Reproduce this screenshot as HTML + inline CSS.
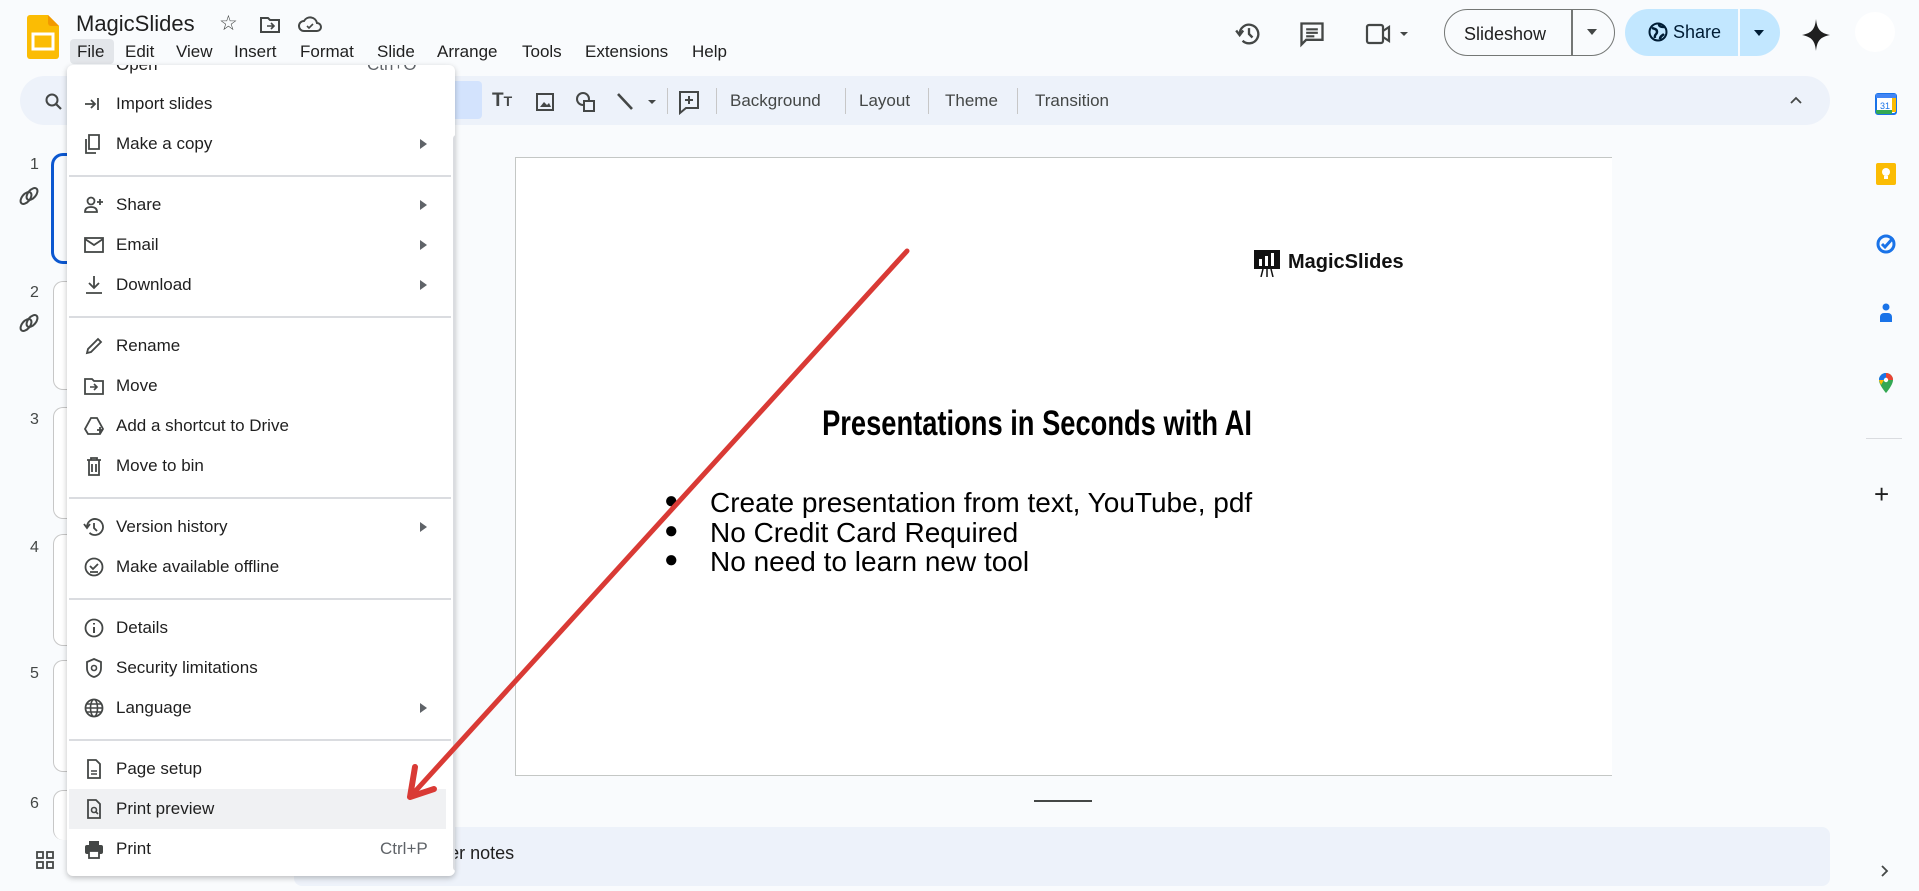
<!DOCTYPE html>
<html><head><meta charset="utf-8"><style>
*{box-sizing:border-box;margin:0;padding:0}
body{width:1919px;height:891px;overflow:hidden;background:#f9fbfd;font-family:"Liberation Sans",sans-serif;color:#1f1f1f;position:relative}
.a{position:absolute}
.mb span{position:absolute;top:42px;font-size:17px;color:#1f1f1f}
.tb{left:20px;top:76px;width:1810px;height:49px;border-radius:25px;background:#edf2fa}
.tt{position:absolute;top:91px;font-size:17px;color:#444746}
.sep{position:absolute;top:88px;width:1px;height:26px;background:#c7c7c7}
.menu{left:67px;top:65px;width:388px;height:811px;background:#fff;border-radius:6px;box-shadow:0 2px 6px rgba(0,0,0,.25);overflow:hidden}
.it{position:absolute;left:0;width:382px;height:40px}
.it .t{position:absolute;left:49px;top:10px;font-size:17px;color:#1f1f1f}
.it .r{position:absolute;left:353px;top:15px;width:0;height:0;border-left:7px solid #5f6368;border-top:5px solid transparent;border-bottom:5px solid transparent}
.it svg{position:absolute;left:16px;top:9px}
.hr{position:absolute;left:2px;width:382px;height:1.5px;background:#dadce0}
.num{position:absolute;left:30px;font-size:16px;color:#444746}
.th{position:absolute;left:53px;width:30px;border:1px solid #c7c7c7;border-right:none;border-radius:10px 0 0 10px;background:#fff}
.rs{position:absolute;left:1875px;width:22px;height:22px}
.bl{position:absolute;font-size:28px;color:#000;white-space:nowrap}
</style></head><body>

<svg class="a" style="left:27px;top:15px" width="32" height="44" viewBox="0 0 32 44"><path d="M3 0h18l11 11v30a3 3 0 0 1-3 3H3a3 3 0 0 1-3-3V3a3 3 0 0 1 3-3z" fill="#fbbc04"/><path d="M21 0l11 11h-8a3 3 0 0 1-3-3z" fill="#f29900"/><rect x="6" y="19" width="20" height="15" fill="none" stroke="#fff" stroke-width="3"/></svg>
<div class="a" style="left:76px;top:11px;font-size:22px;color:#1f1f1f">MagicSlides</div>
<div class="a" style="left:219px;top:11px;font-size:21px;color:#444746">☆</div>
<svg class="a" style="left:259px;top:15px" width="22" height="20" viewBox="0 0 22 20"><path d="M2 3h7l2 2h9v12H2z" fill="none" stroke="#444746" stroke-width="2"/><path d="M8 11h7m-3-3l3 3-3 3" fill="none" stroke="#444746" stroke-width="1.6"/></svg>
<svg class="a" style="left:297px;top:14px" width="26" height="20" viewBox="0 0 26 20"><path d="M7 17a5 5 0 0 1 0-10 7 7 0 0 1 13 2 4 4 0 0 1 0 8z" fill="none" stroke="#444746" stroke-width="2"/><path d="M10 12l2 2 4-4" fill="none" stroke="#444746" stroke-width="1.6"/></svg>

<div class="a" style="left:70px;top:39px;width:44px;height:25px;background:#e3e6ea;border-radius:4px"></div>
<div class="mb"><span style="left:77px">File</span><span style="left:125px">Edit</span><span style="left:176px">View</span><span style="left:234px">Insert</span><span style="left:300px">Format</span><span style="left:377px">Slide</span><span style="left:437px">Arrange</span><span style="left:522px">Tools</span><span style="left:585px">Extensions</span><span style="left:692px">Help</span></div>

<svg class="a" style="left:1235px;top:20px" width="28" height="28" viewBox="0 0 24 24"><path d="M4 12a8 8 0 1 1 2.5 5.8" fill="none" stroke="#444746" stroke-width="2"/><path d="M1 9l3 4 3-4" fill="none" stroke="#444746" stroke-width="2"/><path d="M12 7v5l3 3" fill="none" stroke="#444746" stroke-width="2"/></svg>
<svg class="a" style="left:1298px;top:20px" width="28" height="28" viewBox="0 0 24 24"><path d="M3 3h18v14H7l-4 4z" fill="none" stroke="#444746" stroke-width="2"/><path d="M7 8h10M7 11h10M7 14h7" stroke="#444746" stroke-width="1.8"/></svg>
<svg class="a" style="left:1365px;top:21px" width="45" height="26" viewBox="0 0 45 26"><rect x="2" y="4" width="16" height="18" rx="2" fill="none" stroke="#444746" stroke-width="2.2"/><path d="M18 10l6-4v14l-6-4" fill="none" stroke="#444746" stroke-width="2.2"/><path d="M35 11l4 4 4-4z" fill="#444746"/></svg>
<div class="a" style="left:1444px;top:9px;width:171px;height:47px;border:1.5px solid #747775;border-radius:24px"></div>
<div class="a" style="left:1571px;top:9px;width:1.5px;height:47px;background:#747775"></div>
<div class="a" style="left:1464px;top:24px;font-size:18px;color:#1f1f1f">Slideshow</div>
<div class="a" style="left:1587px;top:29px;border-top:6px solid #444746;border-left:5px solid transparent;border-right:5px solid transparent"></div>
<div class="a" style="left:1625px;top:9px;width:155px;height:47px;background:#c2e7ff;border-radius:24px"></div>
<div class="a" style="left:1738px;top:9px;width:1.5px;height:47px;background:#f9fbfd"></div>
<svg class="a" style="left:1648px;top:22px" width="20" height="20" viewBox="0 0 20 20"><circle cx="10" cy="10" r="8.5" fill="none" stroke="#001d35" stroke-width="2"/><path d="M4 6c3 1 5 1 5 4s-3 2-2 6M11 2c0 3 3 3 6 3M12 17c0-3 2-3 4-5" fill="none" stroke="#001d35" stroke-width="2.5"/></svg>
<div class="a" style="left:1673px;top:22px;font-size:18px;color:#001d35">Share</div>
<div class="a" style="left:1754px;top:30px;border-top:6px solid #001d35;border-left:5px solid transparent;border-right:5px solid transparent"></div>
<svg class="a" style="left:1802px;top:19px" width="28" height="32" viewBox="0 0 28 32"><path d="M14 0C15 10 18 14 28 16 18 18 15 22 14 32 13 22 10 18 0 16 10 14 13 10 14 0z" fill="#1f1f1f"/></svg>
<div class="a" style="left:1855px;top:12px;width:40px;height:40px;border-radius:50%;background:#fff"></div>

<div class="a tb"></div>
<svg class="a" style="left:44px;top:92px" width="20" height="20" viewBox="0 0 20 20"><circle cx="8" cy="8" r="5.5" fill="none" stroke="#444746" stroke-width="2"/><path d="M12 12l5 5" stroke="#444746" stroke-width="2.2"/></svg>
<div class="a" style="left:450px;top:81px;width:32px;height:38px;background:#d3e3fd;border-radius:4px"></div>
<div class="a" style="left:492px;top:90px;font-size:19px;font-weight:bold;color:#444746">T<span style="font-size:14px">T</span></div>
<svg class="a" style="left:534px;top:91px" width="22" height="22" viewBox="0 0 22 22"><rect x="3" y="3" width="16" height="16" fill="none" stroke="#444746" stroke-width="2"/><path d="M6 16l4-5 3 3 2-2 2 4z" fill="#444746"/></svg>
<svg class="a" style="left:574px;top:90px" width="24" height="24" viewBox="0 0 24 24"><circle cx="9" cy="9" r="6" fill="none" stroke="#444746" stroke-width="2"/><rect x="10" y="11" width="10" height="10" fill="#edf2fa" stroke="#444746" stroke-width="2"/></svg>
<svg class="a" style="left:614px;top:90px" width="50" height="24" viewBox="0 0 50 24"><path d="M4 4l14 15" stroke="#444746" stroke-width="2.6"/><path d="M34 10l4 4 4-4z" fill="#444746"/></svg>
<div class="sep" style="left:667px"></div>
<svg class="a" style="left:677px;top:89px" width="24" height="26" viewBox="0 0 24 26"><path d="M3 3h18v16H9l-6 5z" fill="none" stroke="#444746" stroke-width="2"/><path d="M12 7v8M8 11h8" stroke="#444746" stroke-width="2"/></svg>
<div class="sep" style="left:716px"></div>
<div class="tt" style="left:730px">Background</div>
<div class="sep" style="left:845px"></div>
<div class="tt" style="left:859px">Layout</div>
<div class="sep" style="left:928px"></div>
<div class="tt" style="left:945px">Theme</div>
<div class="sep" style="left:1017px"></div>
<div class="tt" style="left:1035px">Transition</div>
<svg class="a" style="left:1789px;top:94px" width="14" height="12" viewBox="0 0 14 12"><path d="M2 9l5-5 5 5" fill="none" stroke="#444746" stroke-width="1.8"/></svg>

<svg class="rs" style="top:93px" viewBox="0 0 22 22"><rect x="1" y="1" width="20" height="20" rx="2" fill="#fff" stroke="#1a73e8" stroke-width="2"/><rect x="1" y="1" width="20" height="4" fill="#4285f4"/><path d="M1 17h16v4H3a2 2 0 0 1-2-2z" fill="#34a853"/><path d="M17 5h4v14h-4z" fill="#fbbc04"/><text x="5" y="16" font-size="9" fill="#1a73e8" font-family="Liberation Sans">31</text></svg>
<svg class="rs" style="top:163px" viewBox="0 0 22 22"><rect x="1" y="0" width="20" height="22" rx="2" fill="#fbbc04"/><circle cx="11" cy="9" r="4" fill="#fff"/><rect x="9" y="13" width="4" height="3" fill="#fff"/></svg>
<svg class="rs" style="top:233px" viewBox="0 0 22 22"><circle cx="11" cy="11" r="8" fill="none" stroke="#1a73e8" stroke-width="3"/><path d="M7 11l3 3 8-9" fill="none" stroke="#1a73e8" stroke-width="3"/></svg>
<svg class="rs" style="top:302px" viewBox="0 0 22 22"><circle cx="11" cy="5" r="3.5" fill="#1a73e8"/><path d="M5 20v-5a4 4 0 0 1 4-4h4a4 4 0 0 1 4 4v5z" fill="#1a73e8"/></svg>
<svg class="rs" style="top:372px" viewBox="0 0 22 22"><path d="M11 1a7 7 0 0 0-7 7c0 5 7 13 7 13s7-8 7-13a7 7 0 0 0-7-7z" fill="#34a853"/><path d="M4 8a7 7 0 0 1 7-7v5a2 2 0 0 0-2 2z" fill="#1a73e8"/><path d="M11 1a7 7 0 0 1 7 7h-5a2 2 0 0 0-2-2z" fill="#ea4335"/><path d="M4 8h5l-3 5z" fill="#fbbc04"/><circle cx="11" cy="8" r="2.2" fill="#fff"/></svg>
<div class="a" style="left:1866px;top:438px;width:36px;height:1px;background:#dadce0"></div>
<div class="a" style="left:1874px;top:479px;font-size:26px;color:#1f1f1f">+</div>
<svg class="a" style="left:1878px;top:864px" width="14" height="14" viewBox="0 0 14 14"><path d="M4 2l5 5-5 5" fill="none" stroke="#444746" stroke-width="1.8"/></svg>

<div class="num" style="top:156px">1</div>
<div class="num" style="top:284px">2</div>
<div class="num" style="top:411px">3</div>
<div class="num" style="top:539px">4</div>
<div class="num" style="top:665px">5</div>
<div class="num" style="top:795px">6</div>
<div class="a" style="left:51px;top:153px;width:30px;height:111px;border:3px solid #0b57d0;border-right:none;border-radius:12px 0 0 12px"></div>
<div class="th" style="top:281px;height:109px"></div>
<div class="th" style="top:407px;height:112px"></div>
<div class="th" style="top:534px;height:112px"></div>
<div class="th" style="top:660px;height:112px"></div>
<div class="th" style="top:790px;height:50px;border-bottom:none"></div>
<svg class="a" style="left:18px;top:185px" width="22" height="22" viewBox="0 0 22 22"><ellipse cx="8" cy="13" rx="4" ry="7" transform="rotate(40 8 13)" fill="none" stroke="#444746" stroke-width="2"/><ellipse cx="14" cy="9" rx="4" ry="7" transform="rotate(40 14 9)" fill="none" stroke="#444746" stroke-width="2"/></svg>
<svg class="a" style="left:18px;top:312px" width="22" height="22" viewBox="0 0 22 22"><ellipse cx="8" cy="13" rx="4" ry="7" transform="rotate(40 8 13)" fill="none" stroke="#444746" stroke-width="2"/><ellipse cx="14" cy="9" rx="4" ry="7" transform="rotate(40 14 9)" fill="none" stroke="#444746" stroke-width="2"/></svg>
<svg class="a" style="left:35px;top:850px" width="20" height="20" viewBox="0 0 20 20"><g fill="none" stroke="#444746" stroke-width="1.8"><rect x="2" y="2" width="6" height="6"/><rect x="12" y="2" width="6" height="6"/><rect x="2" y="12" width="6" height="6"/><rect x="12" y="12" width="6" height="6"/></g></svg>

<div class="a" style="left:515px;top:157px;width:1097px;height:619px;background:#fff;border:1px solid #c4c7c5;border-right:none"></div>
<svg class="a" style="left:1254px;top:250px" width="27" height="27" viewBox="0 0 27 27"><rect x="0" y="0" width="26" height="19" fill="#111"/><rect x="5" y="9" width="3" height="7" fill="#fff"/><rect x="11" y="6" width="3" height="10" fill="#fff"/><rect x="17" y="3" width="3" height="13" fill="#fff"/><path d="M9 19l-2 8M13 19v8M17 19l2 8" stroke="#111" stroke-width="1.5"/></svg>
<div class="a" style="left:1288px;top:251px;font-size:20px;font-weight:bold;color:#111">MagicSlides</div>
<div class="a" style="left:737px;top:404px;width:600px;text-align:center;font-weight:bold;font-size:35px;color:#000;white-space:nowrap;transform:scaleX(.78);transform-origin:center">Presentations in Seconds with AI</div>
<div class="bl" style="left:664px;top:487px;font-size:24px">●</div>
<div class="bl" style="left:664px;top:517px;font-size:24px">●</div>
<div class="bl" style="left:664px;top:546px;font-size:24px">●</div>
<div class="bl" style="left:710px;top:487px">Create presentation from text, YouTube, pdf</div>
<div class="bl" style="left:710px;top:517px">No Credit Card Required</div>
<div class="bl" style="left:710px;top:546px">No need to learn new tool</div>
<div class="a" style="left:1034px;top:800px;width:58px;height:1.5px;background:#444746"></div>

<div class="a" style="left:294px;top:827px;width:1536px;height:59px;background:#edf2fa;border-radius:8px"></div>
<div class="a" style="left:302px;top:843px;font-size:18px;color:#1f1f1f">Click to add speaker notes</div>

<div class="a menu">
<div class="it" style="top:-20px"><span class="t" style="color:#1f1f1f">Open</span><span class="t" style="left:300px;color:#5f6368">Ctrl+O</span></div>
<div class="it" style="top:19px"><svg width="20" height="22" viewBox="0 0 20 22"><path d="M2 11h10m-4-4l4 4-4 4M15 5v12" fill="none" stroke="#444746" stroke-width="1.8"/></svg><span class="t">Import slides</span></div>
<div class="it" style="top:59px"><svg width="20" height="22" viewBox="0 0 20 22"><path d="M6 2h10v14H6zM3 6v14h10" fill="none" stroke="#444746" stroke-width="1.8"/></svg><span class="t">Make a copy</span><span class="r"></span></div>
<div class="hr" style="top:110px"></div>
<div class="it" style="top:120px"><svg width="22" height="22" viewBox="0 0 22 22"><circle cx="8" cy="7" r="3.5" fill="none" stroke="#444746" stroke-width="1.8"/><path d="M2 18c0-4 3-5 6-5s6 1 6 5zM17 5v6M14 8h6" fill="none" stroke="#444746" stroke-width="1.8"/></svg><span class="t">Share</span><span class="r"></span></div>
<div class="it" style="top:160px"><svg width="22" height="22" viewBox="0 0 22 22"><rect x="2" y="4" width="18" height="14" fill="none" stroke="#444746" stroke-width="1.8"/><path d="M2 5l9 6 9-6" fill="none" stroke="#444746" stroke-width="1.8"/></svg><span class="t">Email</span><span class="r"></span></div>
<div class="it" style="top:200px"><svg width="22" height="22" viewBox="0 0 22 22"><path d="M11 2v12m-5-5l5 5 5-5M3 19h16" fill="none" stroke="#444746" stroke-width="1.8"/></svg><span class="t">Download</span><span class="r"></span></div>
<div class="hr" style="top:251px"></div>
<div class="it" style="top:261px"><svg width="22" height="22" viewBox="0 0 22 22"><path d="M4 18l1-4L15 4l3 3L8 17z" fill="none" stroke="#444746" stroke-width="1.8"/></svg><span class="t">Rename</span></div>
<div class="it" style="top:301px"><svg width="22" height="22" viewBox="0 0 22 22"><path d="M2 4h7l2 2h9v13H2z" fill="none" stroke="#444746" stroke-width="1.8"/><path d="M7 12h7m-3-3l3 3-3 3" fill="none" stroke="#444746" stroke-width="1.6"/></svg><span class="t">Move</span></div>
<div class="it" style="top:341px"><svg width="22" height="22" viewBox="0 0 22 22"><path d="M8 3h6l6 11-3 5H5l-3-5z" fill="none" stroke="#444746" stroke-width="1.8"/><path d="M14 15h6M17 12v6" stroke="#444746" stroke-width="1.8"/></svg><span class="t">Add a shortcut to Drive</span></div>
<div class="it" style="top:381px"><svg width="22" height="22" viewBox="0 0 22 22"><path d="M4 5h14M8 5V3h6v2M6 5v15h10V5M9 9v8M13 9v8" fill="none" stroke="#444746" stroke-width="1.8"/></svg><span class="t">Move to bin</span></div>
<div class="hr" style="top:432px"></div>
<div class="it" style="top:442px"><svg width="22" height="22" viewBox="0 0 22 22"><path d="M4 11a8 8 0 1 1 2.5 5.8M1 8l3 4 3-4M11 7v5l3 3" fill="none" stroke="#444746" stroke-width="1.8"/></svg><span class="t">Version history</span><span class="r"></span></div>
<div class="it" style="top:482px"><svg width="22" height="22" viewBox="0 0 22 22"><circle cx="11" cy="11" r="8.5" fill="none" stroke="#444746" stroke-width="1.8"/><path d="M7 10l3 3 5-5M7 16h8" fill="none" stroke="#444746" stroke-width="1.8"/></svg><span class="t">Make available offline</span></div>
<div class="hr" style="top:533px"></div>
<div class="it" style="top:543px"><svg width="22" height="22" viewBox="0 0 22 22"><circle cx="11" cy="11" r="8.5" fill="none" stroke="#444746" stroke-width="1.8"/><path d="M11 10v6M11 6v1.5" stroke="#444746" stroke-width="2"/></svg><span class="t">Details</span></div>
<div class="it" style="top:583px"><svg width="22" height="22" viewBox="0 0 22 22"><path d="M11 2l7 3v6c0 5-3 8-7 9-4-1-7-4-7-9V5z" fill="none" stroke="#444746" stroke-width="1.8"/><circle cx="11" cy="11" r="2.5" fill="none" stroke="#444746" stroke-width="1.6"/></svg><span class="t">Security limitations</span></div>
<div class="it" style="top:623px"><svg width="22" height="22" viewBox="0 0 22 22"><circle cx="11" cy="11" r="8.5" fill="none" stroke="#444746" stroke-width="1.8"/><ellipse cx="11" cy="11" rx="3.5" ry="8.5" fill="none" stroke="#444746" stroke-width="1.6"/><path d="M2.5 11h17M4 7h14M4 15h14" stroke="#444746" stroke-width="1.4"/></svg><span class="t">Language</span><span class="r"></span></div>
<div class="hr" style="top:674px"></div>
<div class="it" style="top:684px"><svg width="22" height="22" viewBox="0 0 22 22"><path d="M5 2h8l4 4v14H5z" fill="none" stroke="#444746" stroke-width="1.8"/><path d="M8 13h6M8 16h6" stroke="#444746" stroke-width="1.6"/></svg><span class="t">Page setup</span></div>
<div class="it" style="top:724px;background:#f0f1f3;left:2px;width:377px"><svg width="22" height="22" viewBox="0 0 22 22" style="left:14px"><path d="M5 2h8l4 4v14H5z" fill="none" stroke="#444746" stroke-width="1.8"/><circle cx="11" cy="12" r="2.5" fill="none" stroke="#444746" stroke-width="1.6"/><path d="M13 14l2 2" stroke="#444746" stroke-width="1.6"/></svg><span class="t" style="left:47px">Print preview</span></div>
<div class="it" style="top:764px"><svg width="22" height="22" viewBox="0 0 22 22"><path d="M6 3h10v4H6z" fill="#444746"/><rect x="2" y="7" width="18" height="9" rx="2" fill="#444746"/><rect x="6" y="13" width="10" height="7" fill="#fff" stroke="#444746" stroke-width="1.8"/></svg><span class="t">Print</span><span class="t" style="left:313px;color:#5f6368">Ctrl+P</span></div>
<div class="a" style="top:70px;width:7px;height:736px;background:#dadce0;border-radius:4px;left:386px"></div>
</div>

<svg class="a" style="left:0;top:0" width="1919" height="891"><path d="M907 251L410 797" stroke="#d93a35" stroke-width="5" stroke-linecap="round"/><path d="M410 797l5-30M410 797l24-8" stroke="#d93a35" stroke-width="6" stroke-linecap="round"/></svg>
</body></html>
